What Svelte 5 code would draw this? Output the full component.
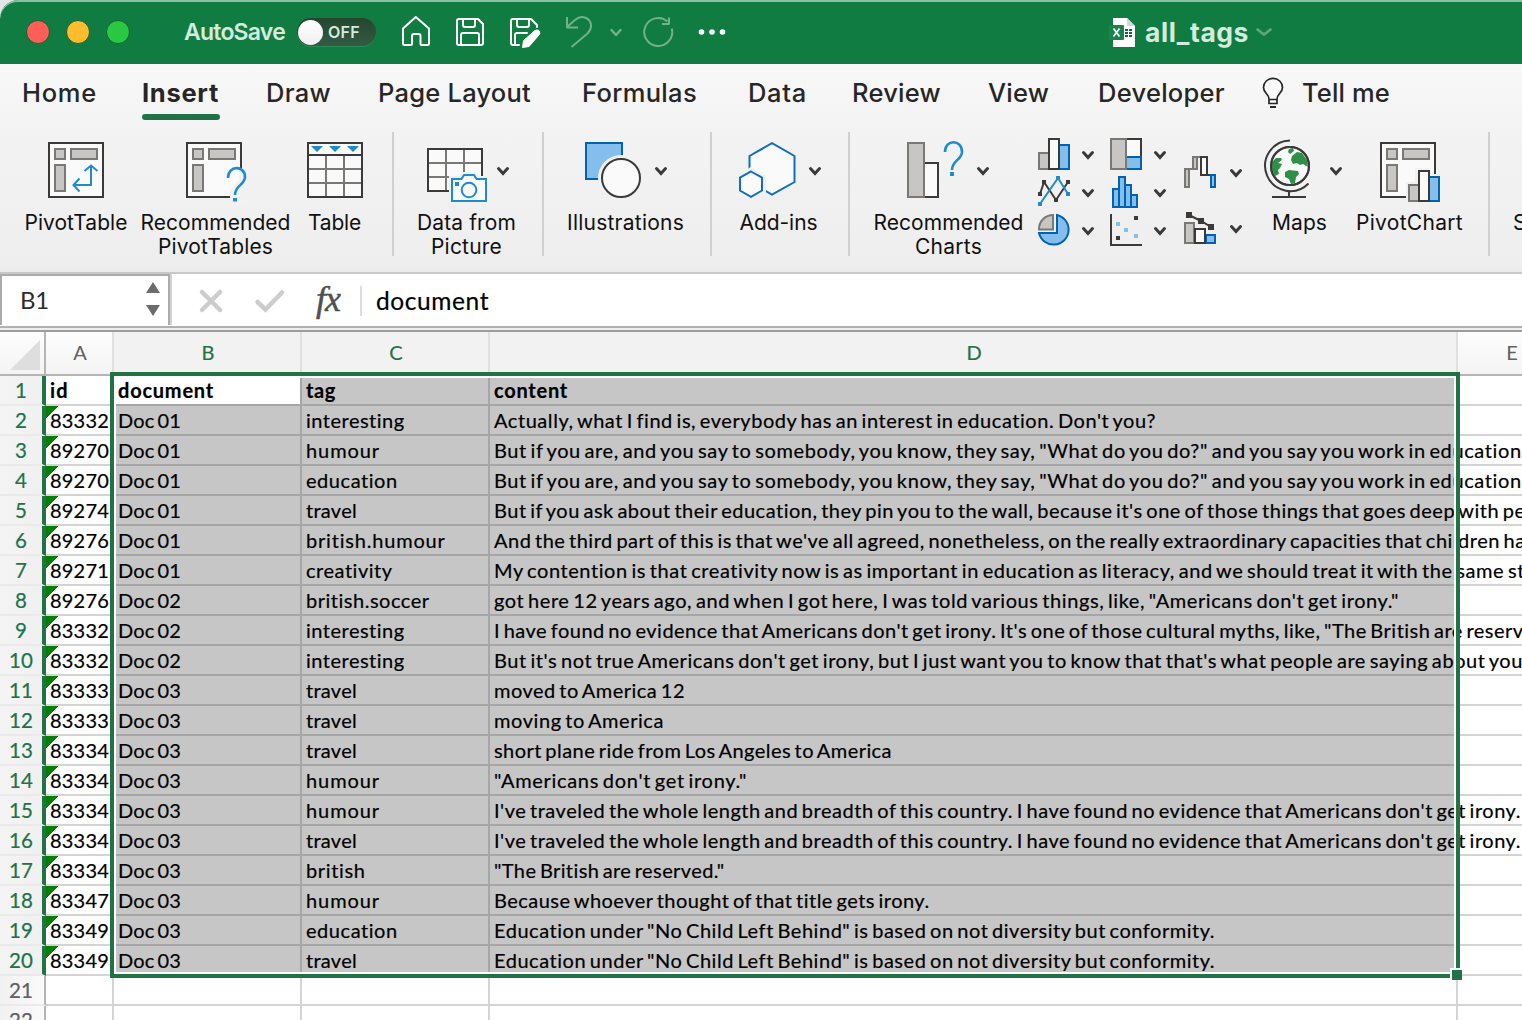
<script>
  function fit(node, width) {
    if (!width) return;
    const natural = node.getBoundingClientRect().width;
    node.style.letterSpacing = `${(width - natural) / node.textContent.length}px`;
  }

  const tabs = [
    ['Home', 75], ['Insert', 77], ['Draw', 65], ['Page Layout', 153], ['Formulas', 115],
    ['Data', 59], ['Review', 89], ['View', 61], ['Developer', 127],
  ];

  const tagWidths = {
    interesting: 99, humour: 74, education: 92, travel: 51, 'british.humour': 140,
    creativity: 87, 'british.soccer': 124, british: 60,
  };

  const rows = [
    ['83332', 'Doc 01', 'interesting', "Actually, what I find is, everybody has an interest in education. Don't you?", 662],
    ['89270', 'Doc 01', 'humour', 'But if you are, and you say to somebody, you know, they say, "What do you do?" and you say you work in education', 1028],
    ['89270', 'Doc 01', 'education', 'But if you are, and you say to somebody, you know, they say, "What do you do?" and you say you work in education', 1028],
    ['89274', 'Doc 01', 'travel', "But if you ask about their education, they pin you to the wall, because it's one of those things that goes deep with pe", 1032],
    ['89276', 'Doc 01', 'british.humour', "And the third part of this is that we've all agreed, nonetheless, on the really extraordinary capacities that children ha", 1032],
    ['89271', 'Doc 01', 'creativity', 'My contention is that creativity now is as important in education as literacy, and we should treat it with the same st', 1032],
    ['89276', 'Doc 02', 'british.soccer', 'got here 12 years ago, and when I got here, I was told various things, like, "Americans don\'t get irony."', 905],
    ['83332', 'Doc 02', 'interesting', 'I have found no evidence that Americans don\'t get irony. It\'s one of those cultural myths, like, "The British are reserv', 1030],
    ['83332', 'Doc 02', 'interesting', "But it's not true Americans don't get irony, but I just want you to know that that's what people are saying about you", 1029],
    ['83333', 'Doc 03', 'travel', 'moved to America 12', 191],
    ['83333', 'Doc 03', 'travel', 'moving to America', 170],
    ['83334', 'Doc 03', 'travel', 'short plane ride from Los Angeles to America', 398],
    ['83334', 'Doc 03', 'humour', '"Americans don\'t get irony."', 253],
    ['83334', 'Doc 03', 'humour', "I've traveled the whole length and breadth of this country. I have found no evidence that Americans don't get irony.", 1027],
    ['83334', 'Doc 03', 'travel', "I've traveled the whole length and breadth of this country. I have found no evidence that Americans don't get irony.", 1027],
    ['83334', 'Doc 03', 'british', '"The British are reserved."', 231],
    ['83347', 'Doc 03', 'humour', 'Because whoever thought of that title gets irony.', 436],
    ['83349', 'Doc 03', 'education', 'Education under "No Child Left Behind" is based on not diversity but conformity.', 721],
    ['83349', 'Doc 03', 'travel', 'Education under "No Child Left Behind" is based on not diversity but conformity.', 721],
  ];
</script>

{#snippet chevron(x, y)}
  <path d="M{x - 4.5} {y - 2.5}L{x} {y + 2.5}L{x + 4.5} {y - 2.5}" fill="none" stroke="#3b3a39" stroke-width="3" stroke-linecap="round" />
{/snippet}

{#snippet label(lines)}
  <div class="label">
    {#each lines as [text, width]}
      <div><span use:fit={width}>{text}</span></div>
    {/each}
  </div>
{/snippet}

{#snippet pivotSheet(x)}
  <rect x={x + 1} y="143" width="54" height="54" fill="#fafafa" stroke="#3b3a39" stroke-width="2" />
  <g fill="#c8c6c4" stroke="#7a7874" stroke-width="2">
    <rect x={x + 7} y="149" width="10" height="10" />
    <rect x={x + 23} y="149" width="26" height="10" />
    <rect x={x + 7} y="165" width="10" height="26" />
  </g>
{/snippet}

<div class="window">
  <header class="titlebar">
    <div class="lights"><i class="close"></i><i class="min"></i><i class="max"></i></div>
    <div class="autosave"><span use:fit={101}>AutoSave</span></div>
    <div class="toggle"><i></i><span use:fit={32}>OFF</span></div>
    <svg class="quick" viewBox="396 8 336 48" width="336" height="48" fill="none" stroke="#fff" stroke-width="2" stroke-linejoin="round" stroke-linecap="round">
      <path d="M403 28.5L415.8 17L429 28.5V43.5q0 1.5-1.5 1.5H421.5q-1 0-1-1V36q0-2-2-2H414q-2 0-2 2v8q0 1-1 1H404.500q-1.500 0-1.500-1.500Z" />
      <path d="M459 19H478L483 24V43q0 2-2 2H459q-2 0-2-2V21q0-2 2-2ZM463 19V25q0 2 2 2H473q2 0 2-2V19M461 45V35q0-2 2-2H477q2 0 2 2V45" />
      <path d="M519 45H513q-2 0-2-2V21q0-2 2-2H531L537 25V27M517 19V25q0 2 2 2H527q2 0 2-2V19M515 45V35q0-2 2-2H527" />
      <path d="M535 30.500q3.500-1.500 4.500 1t-1 4L529 46.500L522.500 47.500L523.500 41Z" fill="#fff" stroke-width="1" />
      <g stroke="#73b08c">
        <path d="M567 17V27.500H578M567.500 26.500L575 20C582 14 591 18 591 26C591 29 590 31 587.500 33.500L571.500 47" stroke-linecap="butt" />
        <path d="M611.500 30L616 35L620.500 30" stroke-width="2.500" />
        <path d="M667.500 21.500A14 14 0 1 0 671.800 28.500M669 17.500V24H662" stroke-linecap="butt" />
      </g>
      <g fill="#fff" stroke="none"><circle cx="701.500" cy="32" r="2.800" /><circle cx="712" cy="32" r="2.800" /><circle cx="722.500" cy="32" r="2.800" /></g>
    </svg>
    <div class="doc">
      <svg viewBox="1108 14 30 34" width="30" height="34">
        <path d="M1113 17H1127L1135 25V46H1113Z" fill="#fff" />
        <path d="M1127 17V25H1135Z" fill="#d3d8d5" />
        <path d="M1125 28h3v2h-3zM1129 28h3v2h-3zM1125 31h3v2h-3zM1129 31h3v2h-3zM1125 34h3v2h-3zM1129 34h3v2h-3z" fill="#17613b" />
        <rect x="1109" y="24" width="15" height="15" rx="1" fill="#1b824c" />
        <path d="M1113.500 27.500L1119.500 35.500M1119.500 27.500L1113.500 35.500" stroke="#fff" stroke-width="1.700" />
      </svg>
      <span use:fit={104}>all_tags</span>
      <svg viewBox="1256 24 16 16" width="16" height="16"><path d="M1257.500 29.500L1264 34.500L1270.500 29.500" fill="none" stroke="#62a67e" stroke-width="2.700" stroke-linecap="round" /></svg>
    </div>
  </header>

  <nav class="tabs">
    {#each tabs as [name, width]}
      <div class:active={name === 'Insert'}><span use:fit={width}>{name}</span></div>
    {/each}
    <div class="bulb">
      <svg viewBox="1261 76 24 34" width="24" height="34" fill="none" stroke="#262626" stroke-width="1.700">
        <path d="M1269 99C1269 94 1263.500 93 1263.500 87.500A9.500 9.200 0 0 1 1282.500 87.500C1282.500 93 1277 94 1277 99V103.500H1269ZM1269 99.500H1277" fill="#fafafa" />
        <path d="M1270 107H1276" stroke-width="2" />
      </svg>
    </div>
    <div><span use:fit={88}>Tell me</span></div>
  </nav>

  <section class="ribbon">
    <div class="group g1">
      <div class="tool w107">
        <svg viewBox="22 132 107 72" width="107" height="72">
          {@render pivotSheet(48)}
          <path d="M91 166V185H73.500M84.500 171L91 165.500L97.500 171M79.500 178.500L73.500 185L79.500 191.500" fill="none" stroke="#1e8bcd" stroke-width="2" />
        </svg>
        {@render label([['PivotTable', 103]])}
      </div>
      <div class="tool w152">
        <svg viewBox="139 132 152 72" width="152" height="72">
          {@render pivotSheet(186)}
          <path d="M224 168H248V203H230V186H224Z" fill="#f1f1f1" />
          <path d="M225 168H239V180L229 192V195H225Z" fill="#fafafa" />
          <path d="M186 197H230M241 142V165" stroke="#3b3a39" stroke-width="2" />
          <path d="M228 178C228 165 245 165 245 177C245 185 235 185 235 195" fill="none" stroke="#1e8bcd" stroke-width="2.600" />
          <rect x="233" y="198" width="4" height="3.500" fill="#1e8bcd" />
        </svg>
        {@render label([['Recommended', 150], ['PivotTables', 115]])}
      </div>
      <div class="tool w66">
        <svg viewBox="301 132 66 72" width="66" height="72">
          <rect x="308" y="143" width="54" height="54" fill="#fafafa" />
          <path d="M308 169H362M308 183H362M326 155V197M344 155V197" stroke="#7a7874" stroke-width="2" />
          <path d="M308 155H362M308 143H362V197H308Z" fill="none" stroke="#3b3a39" stroke-width="2" />
          <path d="M311 146H323L317 152ZM329 146H341L335 152ZM347 146H359L353 152Z" fill="#1e8bcd" />
        </svg>
        {@render label([['Table', 53]])}
      </div>
    </div>

    <div class="group g2">
      <div class="tool w100">
        <svg viewBox="416 132 100 72" width="100" height="72">
          <rect x="428" y="149" width="54" height="42" fill="#fafafa" />
          <path d="M428 163H482M428 177H482M446 149V191M464 149V191" stroke="#7a7874" stroke-width="2" />
          <rect x="428" y="149" width="54" height="42" fill="none" stroke="#3b3a39" stroke-width="2" />
          <path d="M449 176H458L462 172H476L480 176H489V204H449Z" fill="#f1f1f1" />
          <path d="M452 179H461.500L464 175H474L476.500 179H486V201H452Z" fill="#fafafa" stroke="#1e8bcd" stroke-width="2" />
          <circle cx="469" cy="190" r="7.300" fill="none" stroke="#1e8bcd" stroke-width="2" />
          <rect x="455" y="182" width="4" height="4" fill="#1e8bcd" />
          {@render chevron(503, 171)}
        </svg>
        {@render label([['Data from', 99], ['Picture', 71]])}
      </div>
    </div>

    <div class="group g3">
      <div class="tool w120">
        <svg viewBox="565 132 120 72" width="120" height="72">
          <rect x="586" y="143" width="36" height="36" fill="#83beec" stroke="#0063b1" stroke-width="2" />
          <circle cx="621" cy="178" r="23" fill="#f1f1f1" />
          <circle cx="621" cy="178" r="19" fill="#fafafa" stroke="#3b3a39" stroke-width="2" />
          {@render chevron(661, 171)}
        </svg>
        {@render label([['Illustrations', 117]])}
      </div>
    </div>

    <div class="group g4">
      <div class="tool w88">
        <svg viewBox="734 132 88 72" width="88" height="72" fill="#fafafa" stroke="#106ebe" stroke-width="2">
          <path d="M772 143.200L794.500 156V182L772 194.500L749.500 182V156Z" />
          <path d="M751 167L766 176V193L751 202L736 193V176Z" fill="#f1f1f1" stroke="none" />
          <path d="M751 171.500L762 177.700V190.500L751 196.800L740 190.500V177.700Z" />
          {@render chevron(815, 171)}
        </svg>
        {@render label([['Add-ins', 78]])}
      </div>
    </div>

    <div class="group g5">
      <div class="tool w152">
        <svg viewBox="872 132 152 72" width="152" height="72">
          <rect x="924" y="163" width="14" height="34" fill="#fafafa" stroke="#3b3a39" stroke-width="2" />
          <rect x="908" y="143" width="16" height="54" fill="#c8c6c4" stroke="#7a7874" stroke-width="2" />
          <path d="M945 152C945 139 962 139 962 152C962 160 952 160 952 170" fill="none" stroke="#1e8bcd" stroke-width="2.600" />
          <rect x="950" y="172" width="4" height="4" fill="#1e8bcd" />
          {@render chevron(983, 171)}
        </svg>
        {@render label([['Recommended', 150], ['Charts', 67]])}
      </div>

      <svg class="mini" viewBox="1034 132 210 124" width="210" height="124" stroke-width="2">
        <rect x="1039" y="153" width="10" height="16" fill="#c8c6c4" stroke="#7a7874" />
        <rect x="1059" y="145" width="10" height="24" fill="#83beec" stroke="#0063b1" />
        <rect x="1049" y="139" width="10" height="30" fill="#fafafa" stroke="#3b3a39" />
        {@render chevron(1088, 155)}

        <path d="M1040 194L1044 182L1056 200L1068 182" fill="none" stroke="#3b3a39" />
        <path d="M1040 204L1058 178L1068 194" fill="none" stroke="#1e8bcd" />
        <path d="M1038 192h4v4h-4zM1042 180h4v4h-4zM1054 198h4v4h-4zM1066 180h4v4h-4z" fill="#3b3a39" />
        <path d="M1038 202h4v4h-4zM1056 176h4v4h-4zM1066 192h4v4h-4z" fill="#1e8bcd" />
        {@render chevron(1088, 193)}

        <path d="M1053 215V229.500H1039A14 14 0 0 1 1053 215Z" fill="#c8c6c4" stroke="#7a7874" />
        <path d="M1057 215A15 15 0 1 1 1039 233H1057Z" fill="#83beec" stroke="#0063b1" />
        {@render chevron(1088, 231)}

        <rect x="1126" y="139" width="15" height="18" fill="#fafafa" stroke="#3b3a39" />
        <rect x="1126" y="157" width="15" height="12" fill="#83beec" stroke="#0063b1" />
        <rect x="1111" y="139" width="15" height="30" fill="#c8c6c4" stroke="#7a7874" />
        {@render chevron(1160, 155)}

        <path d="M1113 189H1119V177H1125V185H1131V195H1137V207H1113ZM1119 189V207M1125 185V207M1131 195V207" fill="#83beec" stroke="#0063b1" />
        {@render chevron(1160, 193)}

        <path d="M1111 214V245H1142" fill="none" stroke="#3b3a39" />
        <path d="M1134 216h4v4h-4zM1116 236h4v4h-4z" fill="#3b3a39" />
        <path d="M1116 222h4v4h-4zM1124 228h4v4h-4zM1134 234h4v4h-4z" fill="#83beec" />
        {@render chevron(1160, 231)}

        <path d="M1185 169H1189V187H1185ZM1193 157H1197V169H1193ZM1189 169H1193M1197 157H1201" fill="#c8c6c4" stroke="#7a7874" />
        <path d="M1201 157H1207V175H1201ZM1207 175H1211" fill="#fafafa" stroke="#3b3a39" />
        <rect x="1211" y="175" width="4" height="12" fill="#83beec" stroke="#0063b1" />
        {@render chevron(1236, 173)}

        <rect x="1185" y="223" width="9" height="20" fill="#c8c6c4" stroke="#7a7874" />
        <rect x="1206" y="235" width="9" height="8" fill="#83beec" stroke="#0063b1" />
        <rect x="1195" y="229" width="10" height="14" fill="#fafafa" stroke="#3b3a39" />
        <path d="M1189 215L1201 221L1211 227" fill="none" stroke="#3b3a39" />
        <path d="M1186 212h6v6h-6zM1198 218h6v6h-6zM1208 224h6v6h-6z" fill="#3b3a39" />
        {@render chevron(1236, 229)}
      </svg>

      <div class="tool w90">
        <svg viewBox="1254 132 90 72" width="90" height="72" fill="none" stroke="#3b3a39" stroke-width="2">
          <circle cx="1290" cy="166" r="19" fill="#fafafa" />
          <g fill="#2f8f46" stroke="none">
            <path d="M1289 149L1293 148L1294 151L1290 154L1288 152ZM1292 156L1297 152L1302 153L1307 160L1308 167L1303 164L1300 165L1297 163L1293 164L1291 160Z" />
            <path d="M1276 158L1281 158L1282 160L1278 163L1282 164L1280 168L1278 170L1279 174L1275 176L1272 170V162Z" />
            <path d="M1285 172L1289 170L1298 171L1299 174L1296 177L1295 183L1291 184L1289 179L1285 177Z" />
          </g>
          <circle cx="1290" cy="166" r="19" />
          <path d="M1290 140.500A25.300 25.300 0 1 0 1308.500 183.500M1289 191V197M1272 197H1306" />
          {@render chevron(1336, 171)}
        </svg>
        {@render label([['Maps', 55]])}
      </div>

      <div class="tool w110">
        <svg viewBox="1354 132 110 72" width="110" height="72" stroke-width="2">
          {@render pivotSheet(1380)}
          <path d="M1406 182H1415V168H1431V174H1442V204H1406Z" fill="#f1f1f1" />
          <rect x="1409" y="185" width="10" height="16" fill="#c8c6c4" stroke="#7a7874" />
          <rect x="1429" y="177" width="10" height="24" fill="#83beec" stroke="#0063b1" />
          <rect x="1419" y="171" width="10" height="30" fill="#fafafa" stroke="#3b3a39" />
        </svg>
        {@render label([['PivotChart', 107]])}
      </div>
    </div>
    <div class="group g6">{@render label([['S', 0]])}</div>
  </section>

  <section class="formula">
    <div class="namebox">
      <span use:fit={29}>B1</span>
      <svg viewBox="0 0 16 36" width="16" height="36"><path d="M8 1L15 12H1ZM8 35L15 24H1Z" fill="#6b6b6b" /></svg>
    </div>
    <div class="entry">
      <svg viewBox="172 276 190 50" width="190" height="50" fill="none" stroke="#cdcdcd" stroke-width="4.500">
        <path d="M202 292L220 310M220 292L202 310" stroke-linecap="round" />
        <path d="M257.500 302L265.500 309.500L282 292.500" stroke-linecap="round" />
        <path d="M361 286V316" stroke="#dcdcdc" stroke-width="2" />
      </svg>
      <i class="fx">fx</i>
      <span class="value" use:fit={113}>document</span>
    </div>
  </section>

  <section class="sheet">
    <div class="row heads">
      <div class="corner"></div>
      <div>A</div><div class="on">B</div><div class="on">C</div><div class="on">D</div><div class="last">E</div>
    </div>
    <div class="row picked bold">
      <div class="num">1</div>
      <div><span use:fit={19}>id</span></div>
      <div class="anchor"><span use:fit={96}>document</span></div>
      <div class="sel"><span use:fit={30}>tag</span></div>
      <div class="sel"><span use:fit={74}>content</span></div>
      <div></div>
    </div>
    {#each rows as [id, doc, tag, content, width], i}
      <div class="row picked" class:spill={width > 1000}>
        <div class="num">{i + 2}</div>
        <div class="flag"><span use:fit={59}>{id}</span></div>
        <div class="sel"><span use:fit={63}>{doc}</span></div>
        <div class="sel"><span use:fit={tagWidths[tag]}>{tag}</span></div>
        <div class="sel"><span use:fit={width}>{content}</span></div>
        <div></div>
      </div>
    {/each}
    {#each [21, 22] as n}
      <div class="row"><div class="num">{n}</div><div></div><div></div><div></div><div></div><div></div></div>
    {/each}
    <div class="selection"><i></i></div>
  </section>
</div>

<style>
  :global(body) { background: #e4e6e5; overflow: hidden; }
  .window {
    width: 1522px; height: 1020px; overflow: hidden; box-sizing: border-box;
    display: flex; flex-direction: column; border-radius: 18px 0 0 0;
    background: #f3f3f3; font-family: Inter, "Liberation Sans", sans-serif; white-space: nowrap;
  }
  svg { display: block; flex: none; }
  span { display: inline-block; white-space: pre; }

  .titlebar {
    height: 64px; flex: none; box-sizing: border-box; display: flex; align-items: center;
    background: #107c41; box-shadow: inset 0 2px #8abf9f; border-radius: 18px 0 0 0; color: #d6eadf;
  }
  .lights { display: flex; gap: 16px; padding-left: 26px; width: 158px; }
  .lights i { width: 24px; height: 24px; border-radius: 50%; box-sizing: border-box; border: 1px solid #1b5f36; }
  .close { background: #ff5f57; }
  .min { background: #ffbd2e; }
  .max { background: #28c840; }
  .autosave { width: 113px; font-size: 23px; font-weight: 600; }
  .toggle {
    display: flex; align-items: center; width: 79px; height: 28px; border-radius: 14px; box-sizing: border-box;
    background: linear-gradient(#24462f, #335b43); padding-left: 1px; gap: 5px; font-size: 16px; font-weight: 600;
    box-shadow: 0 1px #2c8c57;
  }
  .toggle i { width: 25px; height: 25px; border-radius: 50%; background: linear-gradient(#fff, #efefef); }
  .quick { margin-left: 20px; }
  .doc { display: flex; align-items: center; margin-left: 376px; font-size: 26.500px; font-weight: 700; gap: 7px; }

  .tabs {
    height: 68px; flex: none; display: grid; padding-left: 22px; box-sizing: border-box;
    grid-template-columns: 120px 124px 112px 204px 166px 104px 136px 110px 163px 41px 120px;
    font-size: 25.500px; font-weight: 500; line-height: 30px; color: #262626; padding-top: 14px;
    background: linear-gradient(#f8f8f8, #f3f3f3);
  }
  .tabs .active { font-weight: 700; }
  .tabs .active::after { content: ''; display: block; width: 78px; height: 6px; border-radius: 3px; background: #217346; margin-top: 6px; }
  .bulb { margin-top: -2px; }

  .ribbon { height: 140px; flex: none; display: flex; background: linear-gradient(#f3f3f3, #eee 95%, #ebebeb); }
  .group { display: flex; gap: 10px; height: 124px; box-sizing: border-box; border-left: 2px solid #d0d0d0; padding-left: 22px; flex: none; }
  .g1 { width: 392px; border-left: 0; }
  .g2 { width: 150px; }
  .g3 { width: 168px; padding-left: 21px; }
  .g4 { width: 138px; }
  .g5 { width: 640px; }
  .g6 { width: 60px; padding-top: 72px; }
  .w66 { width: 66px; }
  .w88 { width: 88px; }
  .w90 { width: 90px; }
  .w100 { width: 100px; }
  .w107 { width: 107px; }
  .w110 { width: 110px; }
  .w120 { width: 120px; }
  .w152 { width: 152px; }
  .label { margin-top: 7px; padding-left: 1px; text-align: center; font-size: 21px; line-height: 24px; color: #111; }

  .formula {
    height: 60px; flex: none; box-sizing: border-box; display: flex; background: #fff;
    border-top: 2px solid #c8c8c8; border-bottom: 2px solid #9d9d9d;
    box-shadow: inset 0 -2px #eee, inset 0 -4px #b0b0b0;
  }
  .namebox {
    width: 170px; height: 51px; box-sizing: border-box; display: flex; align-items: center; justify-content: space-between;
    border: 2px solid #ababab; border-bottom: 0; box-shadow: 2px 0 #d3d3d3;
    padding: 0 7px 3px 18px; font: 24px Lato, sans-serif; color: #2b2b2b;
  }
  .entry { display: flex; height: 54px; align-items: center; padding-left: 2px; }
  .entry svg { margin-top: -4px; margin-bottom: -4px; }
  .fx { width: 42px; margin-left: -46px; margin-top: -4px; font: italic 400 36px "Liberation Serif", serif; letter-spacing: -1px; color: #505050; -webkit-text-stroke: 0.5px #505050; }
  .value { margin-left: 18px; margin-top: -2px; font: 24.500px Lato, sans-serif; color: #000; -webkit-text-stroke: 0.2px #000; }

  .sheet { position: relative; flex: none; background: #fff; font-family: Lato, "Liberation Sans", sans-serif; font-size: 20px; color: #000; }
  .row { display: grid; grid-template-columns: 46px 68px 188px 188px 968px 66px; height: 30px; line-height: 28px; }
  .row > div { box-sizing: border-box; border-right: 2px solid #d4d4d4; border-bottom: 2px solid #d4d4d4; padding-left: 4px; height: 30px; min-width: 0; }
  .row:not(.heads) span { word-spacing: -2px; -webkit-text-stroke: 0.2px #000; }
  .row > .num {
    padding: 0 2px 0 0; text-align: center; color: #616161; border-right-color: #b5b5b5; border-bottom-color: #eaeaea;
    background: linear-gradient(90deg, #f1f1f1, #fafafa); font-size: 20.500px; -webkit-text-stroke: 0.2px currentColor;
  }
  .row.picked > .num { color: #217346; background: linear-gradient(90deg, #f4f4f4, #f0f0f0); border-right: 4px solid #217346; padding: 0; }
  .row > .sel { background: #c6c6c6; border-color: #a6a6a6; }
  .row > .anchor { border-color: #a6a6a6; background: #fff; }
  .spill > div:nth-child(5) { position: relative; z-index: 1; }
  .bold > div:not(.num) { font-weight: 700; }
  .flag { background: linear-gradient(135deg, #008000 8.500px, transparent 8.500px); }
  .row.heads { height: 44px; }
  .row.heads > div {
    height: 44px; line-height: 40px; text-align: center; padding: 0 0 0 2px; color: #616161;
    border-bottom-color: #b5b5b5; border-right-color: #e0e0e0; background: linear-gradient(#fdfdfd, #f4f4f4);
  }
  .row.heads > .on { color: #217346; background: #f2f2f2; -webkit-text-stroke: 0.2px #217346; }
  .row.heads > .last { padding-left: 44px; }
  .row.heads > .corner { border-right-color: #b5b5b5; padding: 0; }
  .corner::after { content: ''; display: block; width: 30px; height: 30px; margin: 8px 0 0 10px; background: #dedede; clip-path: polygon(100% 0, 100% 100%, 0 100%); }
  .selection {
    position: absolute; z-index: 2; left: 110px; top: 40px; width: 1350px; height: 606px; box-sizing: border-box;
    border: 4px solid #217346; box-shadow: inset 0 0 0 2px #fff;
  }
  .selection i { position: absolute; right: -6px; bottom: -6px; width: 10px; height: 10px; background: #217346; box-shadow: -2px -2px #fff; }
</style>
